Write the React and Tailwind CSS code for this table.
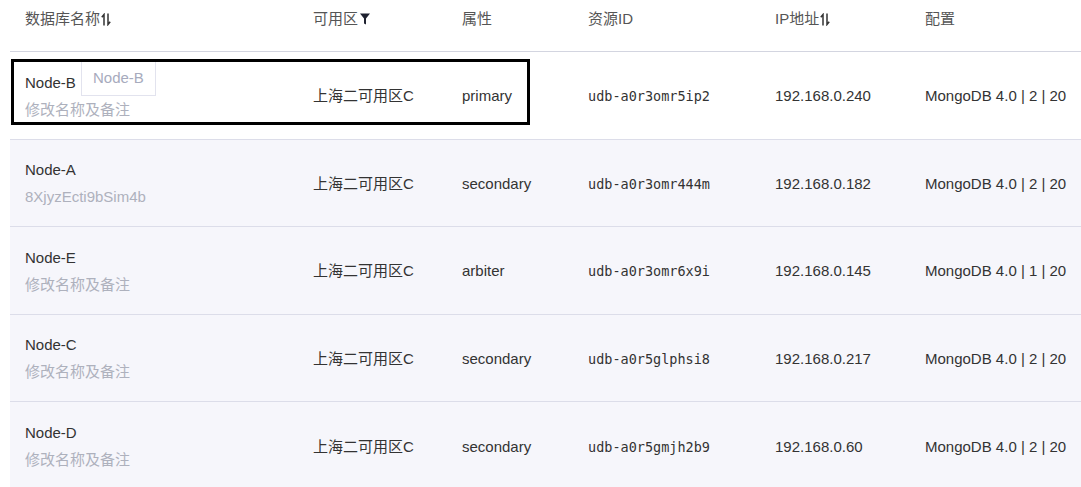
import React from 'react'

const font = { fontFamily: '"Liberation Sans", Arial, "Noto Sans CJK SC", sans-serif' }

const rows = [
  { name: 'Node-B', note: '修改名称及备注', zone: '上海二可用区C', attr: 'primary', id: 'udb-a0r3omr5ip2', ip: '192.168.0.240', cfg: 'MongoDB 4.0 | 2 | 20', active: true },
  { name: 'Node-A', note: '8XjyzEcti9bSim4b', zone: '上海二可用区C', attr: 'secondary', id: 'udb-a0r3omr444m', ip: '192.168.0.182', cfg: 'MongoDB 4.0 | 2 | 20' },
  { name: 'Node-E', note: '修改名称及备注', zone: '上海二可用区C', attr: 'arbiter', id: 'udb-a0r3omr6x9i', ip: '192.168.0.145', cfg: 'MongoDB 4.0 | 1 | 20' },
  { name: 'Node-C', note: '修改名称及备注', zone: '上海二可用区C', attr: 'secondary', id: 'udb-a0r5glphsi8', ip: '192.168.0.217', cfg: 'MongoDB 4.0 | 2 | 20' },
  { name: 'Node-D', note: '修改名称及备注', zone: '上海二可用区C', attr: 'secondary', id: 'udb-a0r5gmjh2b9', ip: '192.168.0.60', cfg: 'MongoDB 4.0 | 2 | 20' },
]

const SortIcon = () => (
  <svg width="10" height="13" viewBox="0 0 10 13" className="ml-[1px] mt-[5px]">
    <path d="M3 12.5V1.5L0.8 4.2" stroke="#333" strokeWidth="1.5" fill="none" />
    <path d="M7 0.5V11.5L9.2 8.8" stroke="#333" strokeWidth="1.5" fill="none" />
  </svg>
)

const FilterIcon = () => (
  <svg width="10" height="12" viewBox="0 0 10 12" className="ml-[2px] mt-[5px]">
    <path d="M0 0.5H10L6 5.5V11.5L4 10.5V5.5Z" fill="#1f2230" />
  </svg>
)

const App = () => {
  return (
    <div className="w-[1081px] h-[487px] overflow-hidden bg-white pl-[10px] relative" style={font}>
      <div className="flex h-[52px] border-b border-[#d3d5e0] text-[15px] text-[#555] pt-[8px] pl-[15px]">
        <div className="w-[288px] flex items-start">数据库名称<SortIcon /></div>
        <div className="w-[149px] flex items-start">可用区<FilterIcon /></div>
        <div className="w-[126px]">属性</div>
        <div className="w-[187px]">资源ID</div>
        <div className="w-[150px] flex items-start">IP地址<SortIcon /></div>
        <div className="flex-1">配置</div>
      </div>
      {rows.map((r, i) => (
        <div
          key={r.id}
          className={`flex items-center h-[87.5px] pl-[15px] pt-[2px] text-[15px] text-[#333] ${i > 0 ? 'bg-[#f6f6fb]' : 'bg-white'} ${i < rows.length - 1 ? 'border-b border-[#dcdde9]' : ''}`}
        >
          <div className="w-[288px] flex flex-col gap-[7px]">
            <div className="flex items-center h-[20px] relative">
              <span>{r.name}</span>
              {r.active && (
                <span className="absolute left-[56px] top-[-12px] h-[35px] px-[11px] flex items-center border border-[#e2e3ee] bg-white text-[#a7abbd]">{r.name}</span>
              )}
            </div>
            <div className="text-[#aeb1bd] leading-[20px]">{r.note}</div>
          </div>
          <div className="w-[149px]">{r.zone}</div>
          <div className="w-[126px]">{r.attr}</div>
          <div className="w-[187px] text-[13.5px]" style={{ fontFamily: '"DejaVu Sans Mono", monospace' }}>{r.id}</div>
          <div className="w-[150px]">{r.ip}</div>
          <div className="flex-1">{r.cfg}</div>
        </div>
      ))}
      <div className="absolute left-[11px] top-[59px] w-[519px] h-[66px] border-[3px] border-black pointer-events-none" />
    </div>
  )
}

export default App
